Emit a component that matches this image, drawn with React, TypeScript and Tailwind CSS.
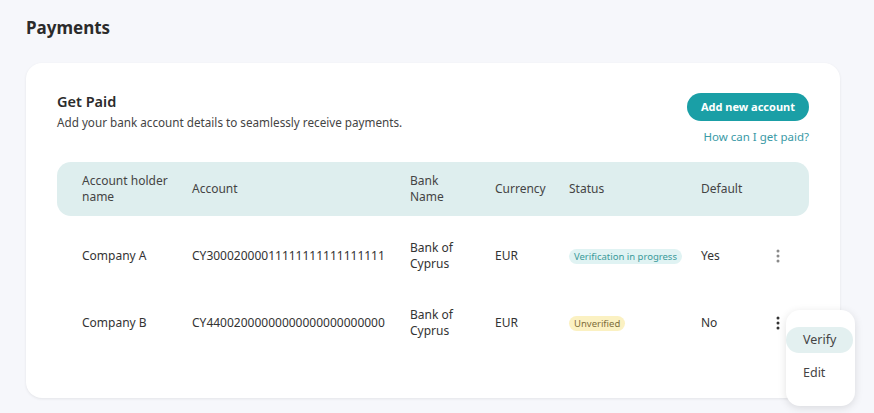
import React from "react";

const Kebab = ({ active }: { active?: boolean }) => (
  <svg width="4" height="14" viewBox="0 0 4 14" className={active ? "text-[#333]" : "text-[#8a8a8a]"}>
    <circle cx="2" cy="2" r="1.5" fill="currentColor" />
    <circle cx="2" cy="7" r="1.5" fill="currentColor" />
    <circle cx="2" cy="12" r="1.5" fill="currentColor" />
  </svg>
);

const cols = "grid grid-cols-[110px_218px_85px_74px_132px_75px_1fr] items-center pl-[25px]";

export default function App() {
  const rows = [
    { name: "Company A", acc: "CY30002000011111111111111111", status: "progress", def: "Yes" },
    { name: "Company B", acc: "CY44002000000000000000000000", status: "unverified", def: "No" },
  ];
  return (
    <div className="w-[874px] h-[413px] bg-[#f6f7fb] overflow-hidden text-[#333]" style={{ fontFamily: '"Noto Sans", sans-serif' }}>
      <div className="pl-[26px] pt-[16px]">
        <h1 className="text-[17px] font-bold text-[#2b2b2b] leading-[24px]">Payments</h1>
      </div>
      <div className="relative ml-[26px] mt-[23px] w-[814px] h-[335px] bg-white rounded-[16px] shadow-[0_1px_3px_rgba(0,0,0,0.08)] px-[31px] pt-[26px]">
        <div className="flex justify-between">
          <div>
            <div className="text-[14.5px] font-semibold text-[#2b2b2b] leading-[20px] mt-[2px]">Get Paid</div>
            <div className="text-[11.7px] text-[#444] leading-[18px] mt-[2px]">Add your bank account details to seamlessly receive payments.</div>
          </div>
          <div className="flex flex-col items-end">
            <button className="h-[28px] px-[14px] rounded-full bg-[#1a9fa6] text-white text-[11px] font-bold mt-[4px]">Add new account</button>
            <div className="text-[11.5px] text-[#3a9aa6] mt-[8px] leading-[16px]">How can I get paid?</div>
          </div>
        </div>
        <div className={`${cols} mt-[17px] h-[54px] bg-[#deeeee] rounded-[14px] text-[12px] text-[#444] leading-[16px]`}>
          <div>Account holder<br />name</div>
          <div>Account</div>
          <div>Bank<br />Name</div>
          <div>Currency</div>
          <div>Status</div>
          <div>Default</div>
          <div />
        </div>
        {rows.map((r, i) => (
          <div key={i} className={`${cols} h-[67px] text-[12px] text-[#333] leading-[16px] ${i === 0 ? "mt-[6px]" : ""}`}>
            <div>{r.name}</div>
            <div>{r.acc}</div>
            <div>Bank of<br />Cyprus</div>
            <div>EUR</div>
            <div>
              {r.status === "progress" ? (
                <span className="inline-block rounded-full bg-[#e0f3f3] text-[#3a9a9a] text-[9.5px] px-[5px] leading-[15px]">Verification in progress</span>
              ) : (
                <span className="inline-block rounded-full bg-[#fbf1c2] text-[#7d6d3a] text-[9.5px] px-[5px] leading-[15px]">Unverified</span>
              )}
            </div>
            <div>{r.def}</div>
            <div><Kebab active={i === 1} /></div>
          </div>
        ))}
        <div className="absolute left-[760px] top-[247px] w-[69px] h-[96px] bg-white rounded-[14px] shadow-[0_2px_8px_rgba(0,0,0,0.12)] pt-[17px]">
          <div className="h-[26px] w-[67px] rounded-full bg-[#e3f0f0] flex items-center pl-[17px] text-[12.5px] text-[#444]">Verify</div>
          <div className="h-[26px] mt-[7px] flex items-center pl-[17px] text-[12.5px] text-[#444]">Edit</div>
        </div>
      </div>
    </div>
  );
}
